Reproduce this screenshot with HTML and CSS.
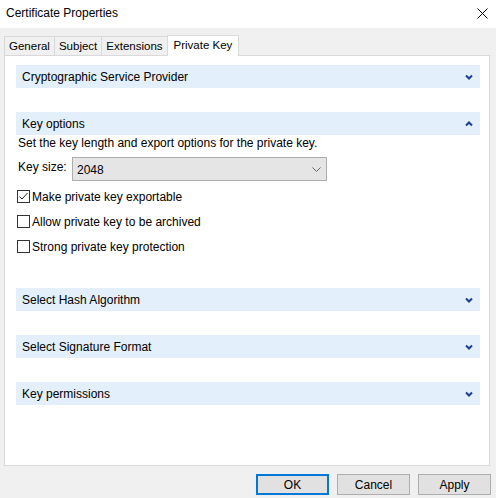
FILE: index.html
```html
<!DOCTYPE html>
<html>
<head>
<meta charset="utf-8">
<link rel="stylesheet" href="styles.css">
</head>
<body>
<div class="window">
  <div class="titlebar">
    <span class="title">Certificate Properties</span>
    <svg class="close" width="11" height="11" viewBox="0 0 11 11"><path d="M0.5 0.5 L10.5 10.5 M10.5 0.5 L0.5 10.5" stroke="#000" stroke-width="1" fill="none"/></svg>
  </div>
  <div class="tabs">
    <div class="tab">General</div>
    <div class="tab">Subject</div>
    <div class="tab">Extensions</div>
    <div class="tab active">Private Key</div>
  </div>
  <div class="panel">
    <div class="hdr"><span>Cryptographic Service Provider</span><svg width="8" height="6" viewBox="0 0 8 6"><path d="M1 1.5 L4 4.5 L7 1.5" stroke="#1a3c96" stroke-width="2" fill="none"/></svg></div>
    <div class="hdr gap"><span>Key options</span><svg width="8" height="6" viewBox="0 0 8 6"><path d="M1 4.5 L4 1.5 L7 4.5" stroke="#1a3c96" stroke-width="2" fill="none"/></svg></div>
    <div class="opts">
      <div class="desc">Set the key length and export options for the private key.</div>
      <div class="keyrow">
        <span class="klabel">Key size:</span>
        <div class="select"><span>2048</span><svg width="9" height="5" viewBox="0 0 9 5"><path d="M0.5 0.5 L4.5 4.5 L8.5 0.5" stroke="#666" stroke-width="1" fill="none"/></svg></div>
      </div>
      <div class="check"><span class="box"><svg width="11" height="11" viewBox="0 0 11 11"><path d="M1.5 5.5 L4 8 L9.5 2" stroke="#222" stroke-width="1" fill="none"/></svg></span>Make private key exportable</div>
      <div class="check"><span class="box"></span>Allow private key to be archived</div>
      <div class="check"><span class="box"></span>Strong private key protection</div>
    </div>
    <div class="hdr gap2"><span>Select Hash Algorithm</span><svg width="8" height="6" viewBox="0 0 8 6"><path d="M1 1.5 L4 4.5 L7 1.5" stroke="#1a3c96" stroke-width="2" fill="none"/></svg></div>
    <div class="hdr gap"><span>Select Signature Format</span><svg width="8" height="6" viewBox="0 0 8 6"><path d="M1 1.5 L4 4.5 L7 1.5" stroke="#1a3c96" stroke-width="2" fill="none"/></svg></div>
    <div class="hdr gap"><span>Key permissions</span><svg width="8" height="6" viewBox="0 0 8 6"><path d="M1 1.5 L4 4.5 L7 1.5" stroke="#1a3c96" stroke-width="2" fill="none"/></svg></div>
  </div>
  <div class="buttons">
    <button class="btn default">OK</button>
    <button class="btn">Cancel</button>
    <button class="btn">Apply</button>
  </div>
</div>
</body>
</html>
```
FILE: styles.css
```css
html, body {
  margin: 0;
  padding: 0;
}
body {
  background: #f0f0f0;
  font-family: "Liberation Sans", Arial, sans-serif;
  font-size: 12px;
  color: #000;
}
.window {
  width: 496px;
  height: 498px;
  display: flex;
  flex-direction: column;
}
.titlebar {
  height: 28px;
  background: #fff;
  display: flex;
  align-items: center;
  justify-content: space-between;
  padding: 0 8px 0 6px;
}
.title {
  font-size: 12px;
  margin-top: -2px;
}
.close {
  margin-top: -2px;
}
.tabs {
  display: flex;
  align-items: flex-end;
  padding-left: 4px;
  margin-top: 7px;
  height: 20px;
  position: relative;
  z-index: 1;
}
.tab {
  height: 19px;
  box-sizing: border-box;
  border: 1px solid #d9d9d9;
  border-right: none;
  border-bottom: none;
  padding: 0 4px;
  font-size: 11.5px;
  line-height: 19px;
  background: #f0f0f0;
}
.tab.active {
  height: 21px;
  background: #fff;
  border-right: 1px solid #d9d9d9;
  padding: 0 6px 0 6px;
  line-height: 18px;
  margin-bottom: -1px;
}
.panel {
  margin: 0 6px 0 4px;
  height: 411px;
  box-sizing: border-box;
  border: 1px solid #d9d9d9;
  background: #fff;
  padding: 9px 9px 0 11px;
  display: flex;
  flex-direction: column;
}
.hdr {
  height: 23px;
  background: #e3effb;
  display: flex;
  align-items: center;
  justify-content: space-between;
  padding: 0 7px 0 6px;
  flex: none;
}
.hdr.gap {
  margin-top: 24px;
}
.hdr.gap2 {
  margin-top: 29px;
}
.opts {
  padding-left: 1px;
}
.desc {
  margin-top: 1px;
  margin-left: 1px;
  line-height: 15px;
}
.keyrow {
  display: flex;
  align-items: center;
  margin-top: 6px;
  margin-left: 1px;
}
.klabel {
  width: 54px;
  margin-top: -4px;
}
.select {
  width: 255px;
  height: 24px;
  box-sizing: border-box;
  background: #e5e5e5;
  border: 1px solid #adadad;
  display: flex;
  align-items: center;
  justify-content: space-between;
  padding: 0 5px 0 4px;
}
.select span {
  margin-top: 2px;
}
.check {
  display: flex;
  align-items: center;
  height: 25px;
}
.keyrow + .check {
  margin-top: 3px;
}
.box {
  width: 13px;
  height: 13px;
  box-sizing: border-box;
  border: 1px solid #333;
  background: #fff;
  margin-right: 2px;
  display: flex;
  align-items: center;
  justify-content: center;
}
.buttons {
  display: flex;
  justify-content: flex-end;
  gap: 8px;
  padding-right: 5px;
  margin-top: 8px;
}
.btn {
  width: 73px;
  height: 21px;
  box-sizing: border-box;
  background: #e1e1e1;
  border: 1px solid #adadad;
  font-family: inherit;
  font-size: 12px;
  color: #000;
  padding: 0;
}
.btn.default {
  border: 2px solid #0078d7;
}
```
